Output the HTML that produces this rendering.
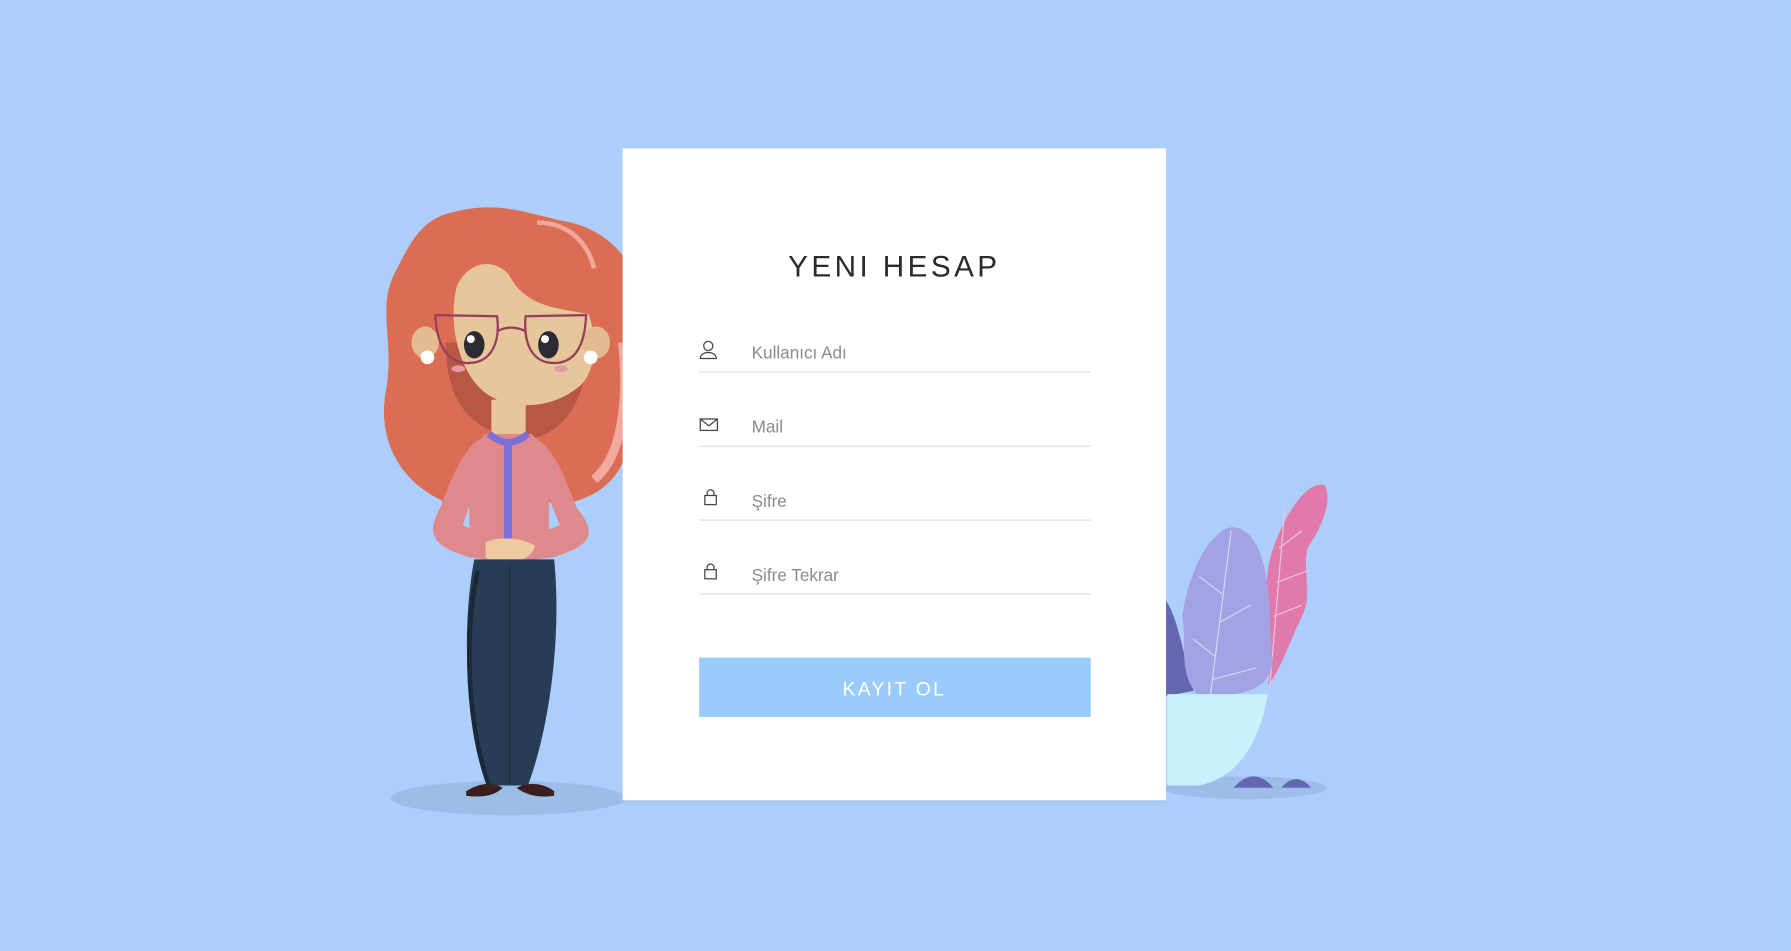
<!DOCTYPE html>
<html><head><meta charset="utf-8"><style>
html,body{margin:0;padding:0;background:#adcefb;overflow:hidden}
svg{display:block}
text{font-family:"Liberation Sans",sans-serif}
</style></head><body>
<svg width="1791" height="951" viewBox="0 0 1568 833" xmlns="http://www.w3.org/2000/svg">
<rect width="1568" height="833" fill="#adcefb"/>
<ellipse cx="445" cy="699" rx="103" ry="15" fill="#9dbde9"/>
<ellipse cx="1090" cy="690" rx="72" ry="10" fill="#9dbde9"/>
<path d="M1110 600 C1120 560 1100 520 1115 480 C1125 450 1145 420 1160 425 C1168 440 1155 465 1145 480 C1140 500 1150 520 1140 540 C1130 560 1120 590 1110 600Z" fill="#e07aaa"/>
<path d="M1125 445 L1112 600 M1120 480 L1140 465 M1118 510 L1145 500 M1115 540 L1140 530" stroke="#f3c3dc" stroke-width="1" fill="none"/>
<path d="M1015 520 C1030 530 1035 570 1045 605 L1020 610Z" fill="#6466b0"/>
<path d="M1050 610 C1030 590 1040 560 1035 540 C1040 510 1050 480 1070 465 C1085 455 1100 470 1105 490 C1115 520 1110 560 1115 580 C1110 600 1100 610 1050 610Z" fill="#a3a2e5"/>
<path d="M1078 465 L1060 608 M1070 520 L1050 505 M1068 545 L1095 530 M1064 575 L1045 560 M1062 595 L1100 585" stroke="#d9d7f6" stroke-width="1" fill="none"/>
<path d="M1022 608 L1110 608 C1105 640 1090 680 1050 688 L1022 688Z" fill="#c9f1fd"/>
<path d="M1080 690 Q1098 670 1115 690Z M1122 690 Q1135 675 1148 690Z" fill="#6466b0"/>
<path d="M400 185 C440 175 470 190 500 195 C540 205 565 240 560 280 C555 320 545 330 550 360 C555 400 540 430 500 440 L390 440 C345 420 330 380 338 340 C345 300 330 270 345 240 C360 210 370 190 400 185Z" fill="#db6d55"/>
<path d="M470 195 C500 195 515 215 520 235" stroke="#f0a89a" stroke-width="4" fill="none"/>
<path d="M545 300 C550 350 545 400 520 420" stroke="#f0aaa0" stroke-width="8" fill="none"/>
<path d="M390 300 C390 350 410 380 460 385 C500 380 515 340 515 300Z" fill="#b75746"/>
<path d="M400 250 C410 230 430 225 445 240 C460 270 490 270 515 275 C525 300 520 330 505 340 C480 360 440 360 420 340 C400 320 392 280 400 250Z" fill="#e8c69c"/>
<ellipse cx="372" cy="300" rx="12" ry="14" fill="#e3bb90"/>
<ellipse cx="522" cy="300" rx="12" ry="14" fill="#e3bb90"/>
<circle cx="374" cy="313" r="6" fill="#fff"/><circle cx="517" cy="313" r="6" fill="#fff"/>
<path d="M381 276 L435 277 C438 300 430 318 410 318 C390 318 382 300 381 276Z M460 277 L513 276 C512 300 505 318 485 318 C465 318 458 300 460 277Z M435 290 Q447 284 460 290" stroke="#94405a" stroke-width="2" fill="none"/>
<ellipse cx="415" cy="302" rx="9" ry="12" fill="#2b2b33"/><ellipse cx="480" cy="302" rx="9" ry="12" fill="#2b2b33"/>
<circle cx="412" cy="297" r="3.5" fill="#fff"/><circle cx="477" cy="297" r="3.5" fill="#fff"/>
<ellipse cx="401" cy="323" rx="6" ry="3" fill="#e49aa0"/><ellipse cx="491" cy="323" rx="6" ry="3" fill="#e49aa0"/>
<path d="M430 350 L430 385 L460 385 L460 350Z" fill="#e8c69c"/>
<path d="M425 380 L465 380 C478 390 482 420 480 480 L412 480 C408 420 412 390 425 380Z" fill="#de8a8d"/>
<path d="M425 382 C405 390 395 420 385 445 C372 470 380 478 410 488 L440 492 L442 476 L405 460 L415 430Z" fill="#de8a8d"/>
<path d="M465 382 C485 390 495 420 505 445 C525 470 515 478 485 488 L452 492 L450 476 L490 460 L478 430Z" fill="#de8a8d"/>
<path d="M428 380 Q445 395 462 380" stroke="#7b6fd8" stroke-width="6" fill="none"/>
<rect x="441" y="388" width="7" height="90" fill="#7b6fd8"/>
<path d="M425 475 C435 470 455 470 468 478 C465 495 430 498 425 488Z" fill="#efc9a0"/>
<path d="M415 490 L485 490 C492 560 480 640 462 688 L428 688 C410 640 402 560 415 490Z" fill="#283d55"/>
<path d="M418 500 C405 560 410 640 428 688" stroke="#1a2838" stroke-width="4" fill="none"/>
<path d="M446 495 L446 688" stroke="#1e3045" stroke-width="1.5"/>
<path d="M408 693 Q425 682 440 690 Q430 700 408 697Z M485 693 Q470 682 452 690 Q465 700 485 697Z" fill="#3b1f1f"/>
<rect x="545" y="131" width="476" height="570" fill="#000" opacity="0.04" transform="translate(0,2)"/>
<rect x="545" y="130" width="476" height="571" fill="#fff"/>
<text x="783" y="242" text-anchor="middle" font-size="26" letter-spacing="3" fill="#2a2a2a">YENI HESAP</text>
<g font-size="15" fill="#8a8a8a">
<text x="658" y="314">Kullanıcı Adı</text>
<text x="658" y="379">Mail</text>
<text x="658" y="444">Şifre</text>
<text x="658" y="509">Şifre Tekrar</text>
</g>
<g stroke="#e2e2e2" stroke-width="1.2">
<line x1="612" y1="326" x2="955" y2="326"/><line x1="612" y1="391" x2="955" y2="391"/>
<line x1="612" y1="455.5" x2="955" y2="455.5"/><line x1="612" y1="520.5" x2="955" y2="520.5"/>
</g>
<g stroke="#444" stroke-width="1.1" fill="none">
<circle cx="620" cy="303" r="4"/><path d="M613 314 C613 307 627 307 627 314 Z"/>
<rect x="613" y="367" width="15" height="10"/><path d="M613 367 L620.5 373 L628 367"/>
<rect x="617" y="434" width="10" height="8"/><path d="M619 434 L619 431 Q622 427 625 431 L625 434"/>
<rect x="617" y="499" width="10" height="8"/><path d="M619 499 L619 496 Q622 492 625 496 L625 499"/>
</g>
<rect x="612" y="576" width="343" height="52" fill="#99cbfd"/>
<text x="783" y="609" text-anchor="middle" font-size="17" letter-spacing="2" fill="#fff">KAYIT OL</text>
</svg>
</body></html>
